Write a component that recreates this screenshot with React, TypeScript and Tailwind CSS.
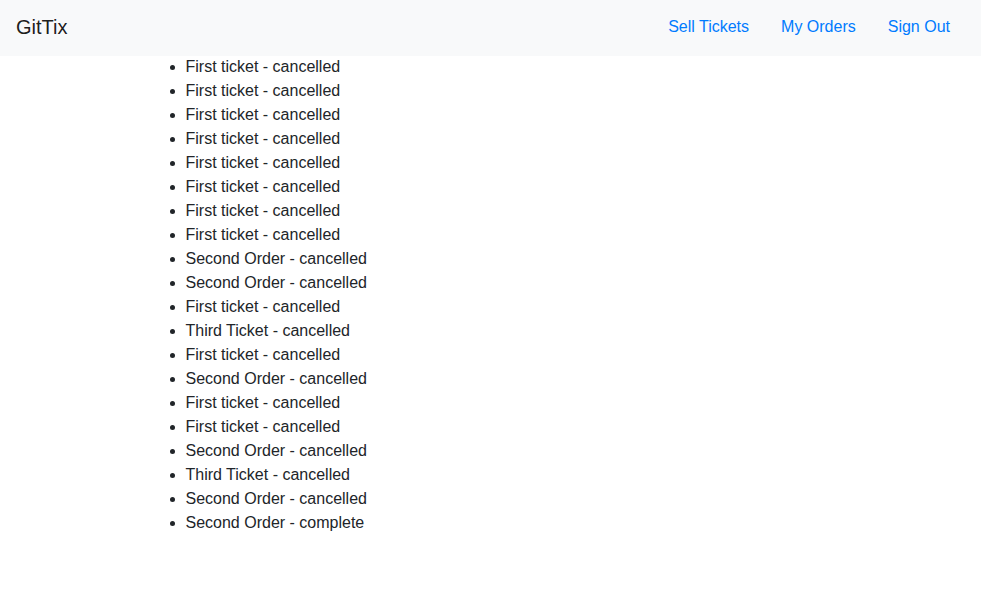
const orders: { title: string; status: string }[] = [
  { title: 'First ticket', status: 'cancelled' },
  { title: 'First ticket', status: 'cancelled' },
  { title: 'First ticket', status: 'cancelled' },
  { title: 'First ticket', status: 'cancelled' },
  { title: 'First ticket', status: 'cancelled' },
  { title: 'First ticket', status: 'cancelled' },
  { title: 'First ticket', status: 'cancelled' },
  { title: 'First ticket', status: 'cancelled' },
  { title: 'Second Order', status: 'cancelled' },
  { title: 'Second Order', status: 'cancelled' },
  { title: 'First ticket', status: 'cancelled' },
  { title: 'Third Ticket', status: 'cancelled' },
  { title: 'First ticket', status: 'cancelled' },
  { title: 'Second Order', status: 'cancelled' },
  { title: 'First ticket', status: 'cancelled' },
  { title: 'First ticket', status: 'cancelled' },
  { title: 'Second Order', status: 'cancelled' },
  { title: 'Third Ticket', status: 'cancelled' },
  { title: 'Second Order', status: 'cancelled' },
  { title: 'Second Order', status: 'complete' },
];

const links = ['Sell Tickets', 'My Orders', 'Sign Out'];

// Header bar, bootstrap-ish light navbar
const Header = () => (
  <nav className="flex items-center justify-between bg-[#f8f9fa] pl-4 pr-[15px] pt-[7px] pb-[9px]">
    <a className="py-[5px] text-[20px] leading-[30px] text-black/90">GitTix</a>
    <ul className="flex items-center">
      {links.map((l) => (
        <li key={l}>
          <a className="block px-4 py-2 text-base leading-6 text-[#007bff]">{l}</a>
        </li>
      ))}
    </ul>
  </nav>
);

export default function App() {
  return (
    <div
      className="min-h-screen bg-white text-base leading-6 text-[#212529]"
      style={{ fontFamily: '"Liberation Sans", Arial, sans-serif' }}
    >
      <Header />
      <div className="mx-auto w-full max-w-[720px] px-[15px]">
        <ul className="-mt-px mb-4 list-disc pl-10">
          {orders.map((o, i) => (
            <li key={i}>
              {o.title} - {o.status}
            </li>
          ))}
        </ul>
      </div>
    </div>
  );
}
